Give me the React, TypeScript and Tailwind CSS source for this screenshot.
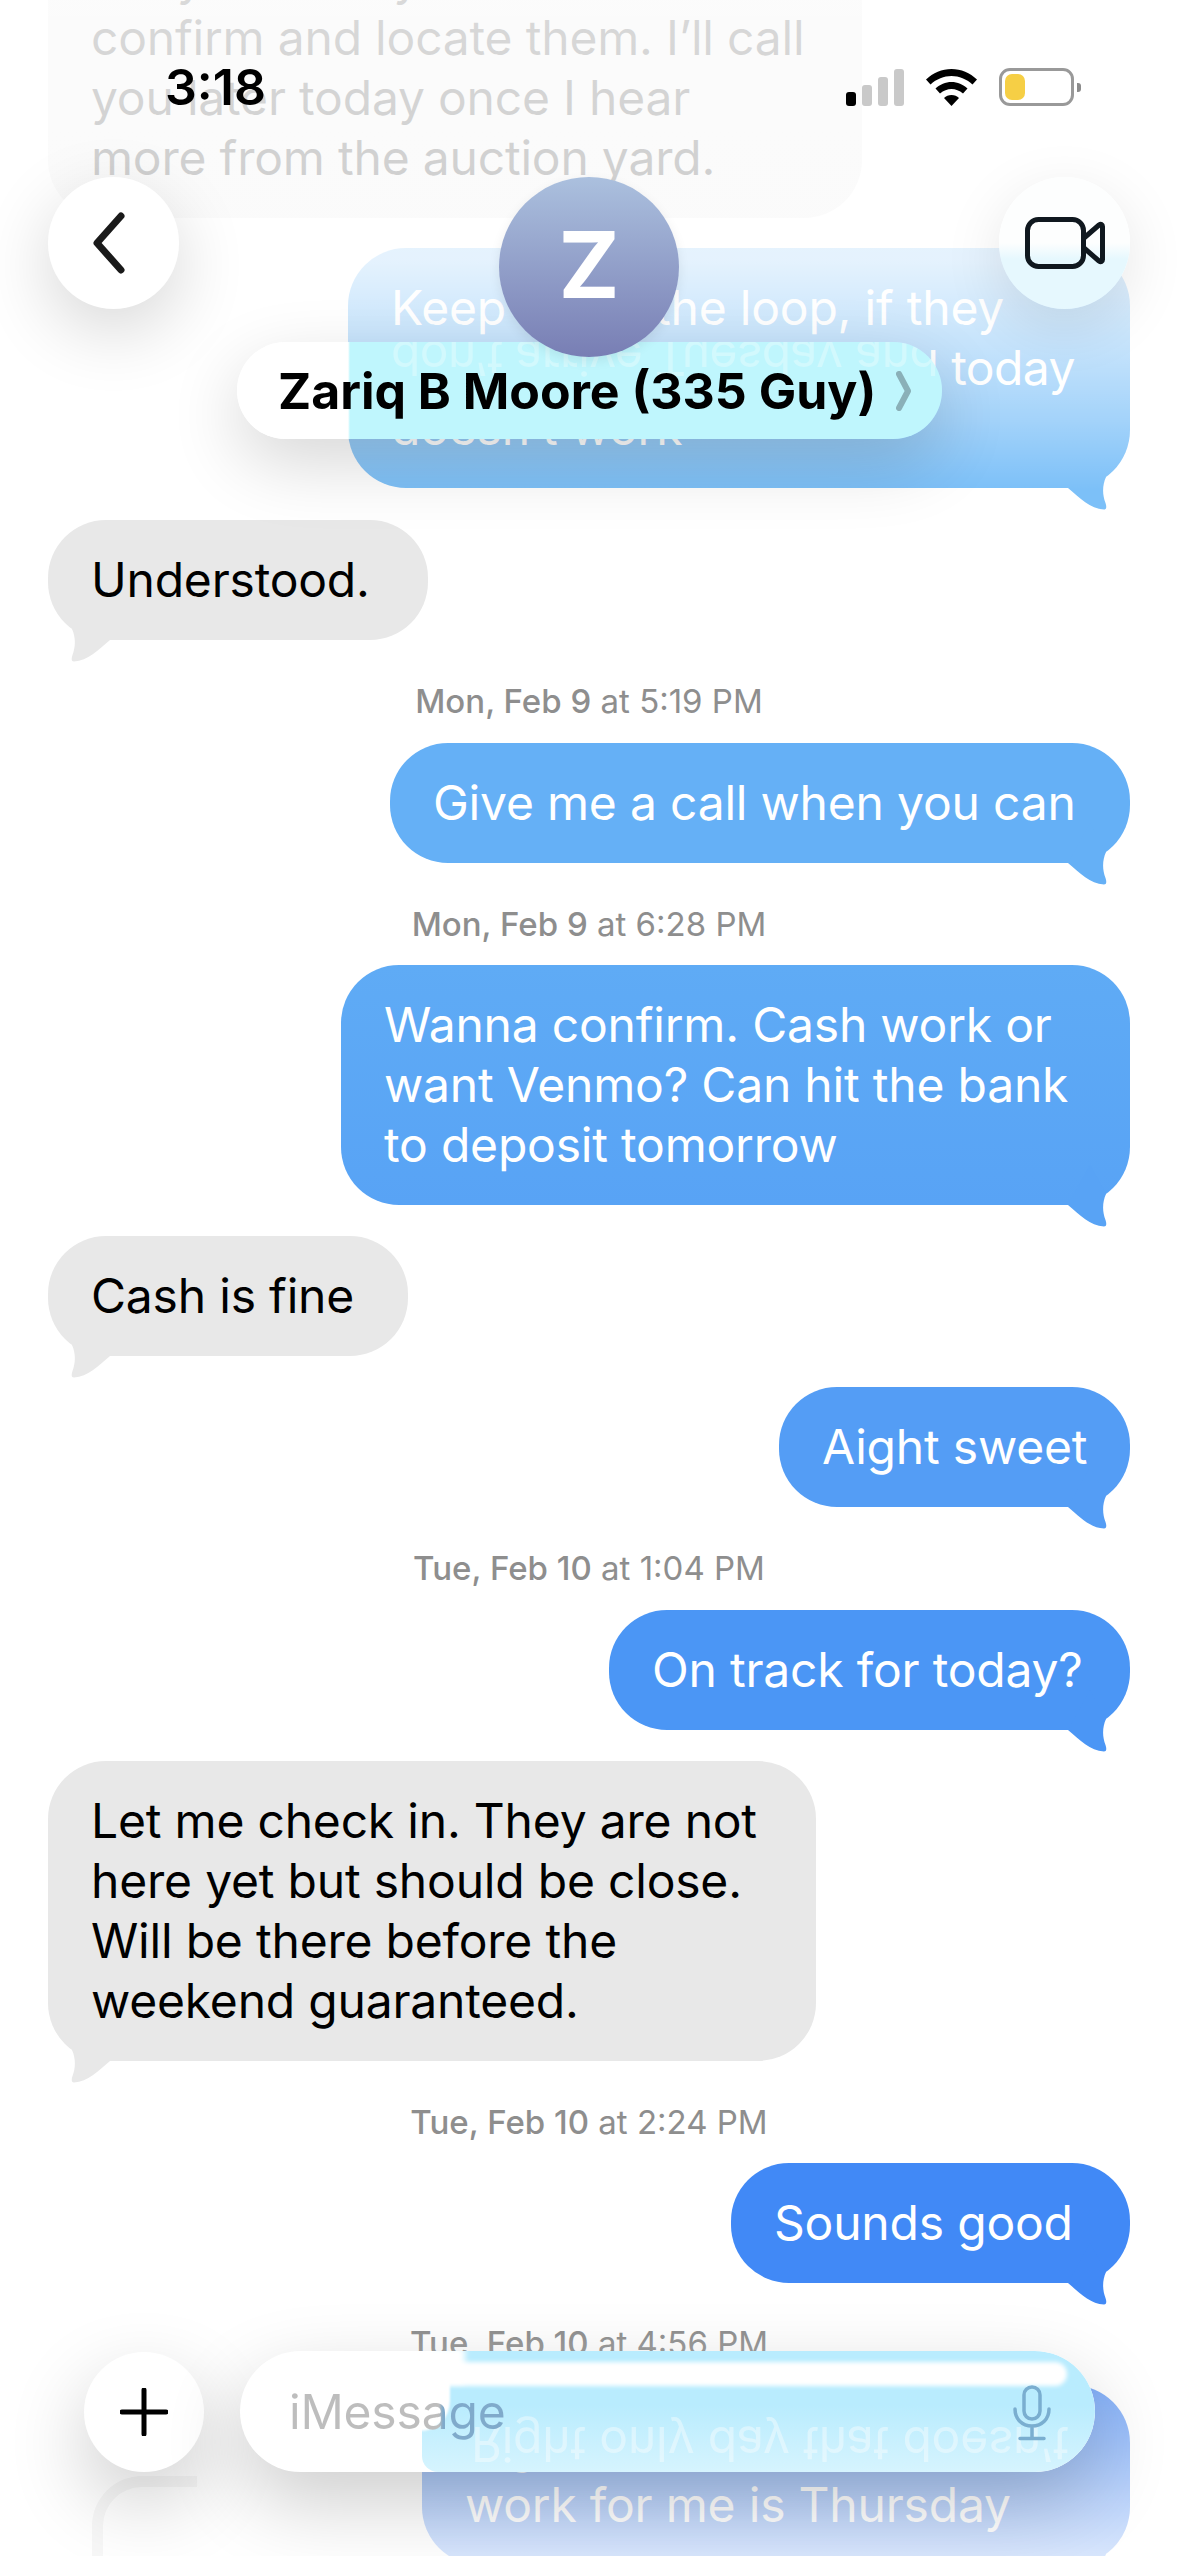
import React from 'react';

type BubbleProps = {
    out?: boolean;
    className: string;
    tail: string;
    children: React.ReactNode;
};

// tail sits under the bottom corner, grey ones are just mirrored
const Bubble: React.FC<BubbleProps> = ({ out, className, tail, children }) => (
    <div className={`relative whitespace-nowrap rounded-[58px] py-[30px] pl-[43px] text-[48px] leading-[60px] tracking-[-0.2px] ${out ? 'self-end text-white' : 'self-start text-black'} ${className}`}>
        <svg
            width="70"
            height="62"
            viewBox="0 0 70 62"
            className={`absolute bottom-[-22px] ${out ? 'right-0' : 'left-0 -scale-x-100'} ${tail}`}
        >
            <path d="M8 40 C20 50 30 61 44 61.5 C47 61.5 46.5 58 45.5 55 C42.5 47 42 38 46 29 L30 0 Z" />
        </svg>
        <span className="relative">{children}</span>
    </div>
);

const Stamp: React.FC<{ day: string; time: string; className: string }> = ({ day, time, className }) => (
    <div className={`h-[40px] self-center text-center text-[33px] leading-[40px] text-[#8e8e8e] ${className}`}>
        <span className="font-medium">{day}</span> at {time}
    </div>
);

const StatusBar = () => (
    <div className="absolute left-0 right-0 top-0 flex h-[130px] items-center pl-[165px] pr-[98px] pt-[64px] pb-[20px]">
        <span className="text-[50px] font-semibold leading-none text-black">3:18</span>
        <div className="ml-auto flex items-end gap-[22px]">
            <div className="flex items-end gap-[6px]">
                <div className="h-[14px] w-[10px] rounded-[3px] bg-black" />
                <div className="h-[21px] w-[10px] rounded-[3px] bg-[#c9c9c9]" />
                <div className="h-[29px] w-[10px] rounded-[3px] bg-[#c9c9c9]" />
                <div className="h-[37px] w-[10px] rounded-[3px] bg-[#c9c9c9]" />
            </div>
            <svg width="51" height="37" viewBox="0 0 51 37" className="fill-black">
                <path d="M25.5 0C35 0 44 4 51 10.500L46.500 15.500C40.500 10 33 7 25.500 7C18 7 10.500 10 4.500 15.500L0 10.500C7 4 16 0 25.500 0Z" />
                <path d="M25.500 13C31.500 13 37 15.500 41.500 19.500L37 24.500C33.500 21.500 29.500 20 25.500 20C21.500 20 17.500 21.500 14 24.500L9.500 19.500C14 15.500 19.500 13 25.500 13Z" />
                <path d="M25.500 26C28.500 26 31 27 33 29L25.500 37L18 29C20 27 22.500 26 25.500 26Z" />
            </svg>
            <div className="flex items-center gap-[3px]">
                <div className="h-[38px] w-[75px] rounded-[11px] border-[3px] border-[#999999] p-[3px]">
                    <div className="h-full w-[20px] rounded-[7px] bg-[#f6cf45]" />
                </div>
                <div className="h-[9px] w-[4px] rounded-r-[3px] bg-[#8b8b8b]" />
            </div>
        </div>
    </div>
);

const NavBar = () => (
    <>
        <button className="absolute left-[48px] top-[177px] flex h-[132px] w-[131px] items-center justify-center rounded-full bg-white shadow-[0_22px_70px_rgba(0,0,0,0.16)]">
            <svg width="38" height="62" viewBox="0 0 38 62" fill="none" className="mr-[10px] stroke-[#1a1a1a]">
                <path d="M31 4 L7 31 L31 58" strokeWidth="7" strokeLinecap="round" strokeLinejoin="round" />
            </svg>
        </button>

        <button className="absolute left-[999px] top-[177px] flex h-[132px] w-[131px] items-center justify-center rounded-full bg-[linear-gradient(to_bottom,#fdfefe_50%,#e6f8fe_62%)] shadow-[0_16px_60px_rgba(0,0,0,0.1)]">
            <svg width="80" height="52" viewBox="0 0 80 52" fill="none" className="stroke-[#10181f]">
                <rect x="2.500" y="2.500" width="56" height="47" rx="11" strokeWidth="5" />
                <path d="M59 21 L74 8 C76 6.500 77.500 7.500 77.500 9.500 L77.500 42.500 C77.500 44.500 76 45.500 74 44 L59 31" strokeWidth="5" strokeLinejoin="round" />
            </svg>
        </button>

        <div className="absolute left-[237px] top-[342px] flex h-[97px] w-[705px] items-center rounded-full bg-[linear-gradient(to_right,#ffffff_111px,#bff6fd_113px)] pl-[41px] shadow-[0_24px_70px_rgba(0,0,0,0.16)]">
            <div className="absolute inset-0 overflow-hidden rounded-full">
                <div className="absolute left-[154px] top-[-6px] -scale-y-100 whitespace-nowrap text-[48px] leading-[44px] tracking-[-0.6px] text-white/30">
                    don’t arrive Tuesday and
                </div>
            </div>
            <span className="relative whitespace-nowrap text-[50px] font-bold leading-none text-black">Zariq B Moore (335 Guy)</span>
            <svg width="16" height="40" viewBox="0 0 16 40" fill="none" className="relative ml-[20px] stroke-[#8ab0b8]">
                <path d="M3 3 L12 20 L3 37" strokeWidth="6" strokeLinecap="round" strokeLinejoin="round" />
            </svg>
        </div>

        <div className="absolute left-[499px] top-[177px] flex h-[180px] w-[180px] items-center justify-center rounded-full bg-[linear-gradient(to_bottom,#abc0de,#787eb4)] pb-[4px] text-[92px] font-bold leading-none text-white shadow-[0_4px_12px_rgba(0,0,0,0.08)]">
            Z
        </div>
    </>
);

const InputBar = () => (
    <div className="absolute bottom-[84px] left-[84px] flex items-center gap-[36px]">
        <button className="flex h-[120px] w-[120px] items-center justify-center rounded-full bg-white shadow-[0_30px_80px_rgba(0,0,0,0.2)]">
            <svg width="48" height="48" viewBox="0 0 48 48" className="stroke-black" fill="none">
                <path d="M24 2V46M2 24H46" strokeWidth="5" strokeLinecap="round" />
            </svg>
        </button>

        <div className="relative h-[121px] w-[855px] overflow-hidden rounded-full bg-white shadow-[0_30px_80px_rgba(0,0,0,0.2)]">
            {/* glassy part where the blue bubble passes underneath */}
            <div className="absolute inset-y-0 left-[182px] right-0 rounded-l-[16px] rounded-r-[60px] bg-[linear-gradient(to_bottom,#b9ecfe_45%,#d6f4fe)]" />
            <div className="absolute left-[150px] right-[28px] top-[11px] h-[24px] rounded-full bg-white blur-[2px]" />
            <div className="absolute left-[150px] top-[-4px] h-[36px] w-[75px] bg-white blur-[3px]" />
            <div className="absolute left-[178px] top-[30px] h-[50px] w-[32px] rounded-br-[30px] bg-white blur-[1px]" />
            <div className="absolute left-[231px] top-[71px] -scale-y-100 whitespace-nowrap text-[48px] leading-[44px] tracking-[-0.2px] text-white/40">
                Right only day that doesn’t
            </div>
            <div className="absolute left-[49px] top-[31px] w-[300px] bg-[linear-gradient(to_right,#bdbdbd_150px,#80aacb_154px)] bg-clip-text text-[48px] leading-[60px] tracking-[-0.2px] text-transparent">
                iMessage
            </div>
            <svg width="38" height="56" viewBox="0 0 38 56" fill="none" className="absolute right-[44px] top-[34px] stroke-[#7aaed0]">
                <rect x="11" y="2" width="16" height="32" rx="8" strokeWidth="3.500" />
                <path d="M2 24C2 34 9 41 19 41C29 41 36 34 36 24M19 41V53M7 53.500H31" strokeWidth="3.500" strokeLinecap="round" />
            </svg>
        </div>
    </div>
);

export default function App() {
    return (
        <div className="relative h-[2556px] w-[1179px] overflow-hidden bg-white font-['Inter',sans-serif]">
            <div className="flex flex-col pl-[48px] pr-[49px] mt-[-82px]">
                <Bubble className="w-[814px] bg-[#e8e8e8]" tail="fill-[#e8e8e8]">
                    They said they should be there to<br />
                    confirm and locate them. I’ll call<br />
                    you later today once I hear<br />
                    more from the auction yard.
                </Bubble>
                <Bubble out className="mt-[30px] w-[782px] bg-[#7cc0f8]" tail="fill-[#7cc0f8]">
                    Keep me in the loop, if they<br />
                    <span className="tracking-[-0.6px]">don’t arrive Tuesday and today</span><br />
                    doesn’t work
                </Bubble>
                <Bubble className="mt-[32px] w-[380px] bg-[#e8e8e8]" tail="fill-[#e8e8e8]">Understood.</Bubble>

                <Stamp day="Mon, Feb 9" time="5:19 PM" className="mt-[41px]" />
                <Bubble out className="mt-[22px] w-[740px] bg-[#65b0f6]" tail="fill-[#65b0f6]">Give me a call when you can</Bubble>

                <Stamp day="Mon, Feb 9" time="6:28 PM" className="mt-[41px]" />
                <Bubble out className="mt-[21px] w-[789px] bg-[linear-gradient(to_bottom,#5fabf5,#58a3f5)]" tail="fill-[#58a3f5]">
                    Wanna confirm. Cash work or<br />
                    want Venmo? Can hit the bank<br />
                    to deposit tomorrow
                </Bubble>
                <Bubble className="mt-[31px] w-[360px] bg-[#e8e8e8]" tail="fill-[#e8e8e8]">Cash is fine</Bubble>
                <Bubble out className="mt-[31px] w-[351px] bg-[#549df5]" tail="fill-[#549df5]">Aight sweet</Bubble>

                <Stamp day="Tue, Feb 10" time="1:04 PM" className="mt-[41px]" />
                <Bubble out className="mt-[22px] w-[521px] bg-[#4b96f5]" tail="fill-[#4b96f5]">On track for today?</Bubble>
                <Bubble className="mt-[31px] w-[768px] bg-[#e8e8e8]" tail="fill-[#e8e8e8]">
                    Let me check in. They are not<br />
                    here yet but should be close.<br />
                    Will be there before the<br />
                    weekend guaranteed.
                </Bubble>

                <Stamp day="Tue, Feb 10" time="2:24 PM" className="mt-[41px]" />
                <Bubble out className="mt-[21px] w-[399px] bg-[#4189f6]" tail="fill-[#4189f6]">Sounds good</Bubble>

                <Stamp day="Tue, Feb 10" time="4:56 PM" className="mt-[40px]" />
                <Bubble out className="mt-[22px] w-[708px] bg-[#3c82f5]" tail="fill-[#3c82f5]">
                    Right only day that doesn’t<br />
                    work for me is Thursday
                </Bubble>
            </div>

            {/* fades under the floating bars */}
            <div className="absolute inset-x-0 top-0 h-[500px] bg-[linear-gradient(to_bottom,rgba(255,255,255,0.85)_0,rgba(255,255,255,0.8)_260px,rgba(255,255,255,0.55)_350px,rgba(255,255,255,0.3)_420px,rgba(255,255,255,0)_490px)]" />
            <div className="absolute inset-x-0 bottom-0 h-[230px] bg-[linear-gradient(to_bottom,rgba(255,255,255,0)_0,rgba(255,255,255,0.4)_70px,rgba(255,255,255,0.65)_170px,rgba(255,255,255,0.8)_100%)]" />
            <div className="absolute bottom-0 left-[92px] h-[80px] w-[105px] rounded-tl-[50px] border-l-[11px] border-t-[11px] border-[#f7f7f7]" />

            <StatusBar />
            <NavBar />
            <InputBar />
        </div>
    );
}
